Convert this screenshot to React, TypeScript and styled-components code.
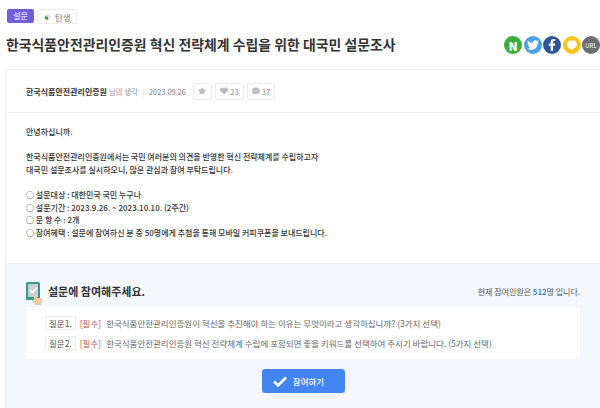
import React from "react";
import styled, { createGlobalStyle } from "styled-components";
import { FaFacebookF, FaTwitter, FaStar, FaHeart, FaCommentDots } from "react-icons/fa";
import { RiChat1Fill } from "react-icons/ri";

const GlobalStyle = createGlobalStyle`
  html, body {
    margin: 0;
    padding: 0;
    background: #fff;
    overflow: hidden;
  }
  body {
    font-family: "Noto Sans CJK KR", "Noto Sans", sans-serif;
    color: #444;
  }
`;

const Page = styled.div`
  width: 600px;
  height: 408px;
  overflow: hidden;
`;

const TagRow = styled.div`
  display: flex;
  gap: 3px;
  padding: 9px 0 0 7px;
  height: 14px;
`;

const PurpleTag = styled.span`
  width: 27px;
  height: 14px;
  border-radius: 2px;
  background: #6f5fd8;
  color: #fff;
  font-size: 8px;
  line-height: 14px;
  text-align: center;
`;

const OutlineTag = styled.span`
  display: flex;
  align-items: center;
  gap: 4px;
  height: 13px;
  padding: 0 5px;
  border: 1px solid #eee;
  border-radius: 2px;
  color: #777;
  font-size: 8.5px;
`;

const TitleRow = styled.div`
  display: flex;
  align-items: center;
  justify-content: space-between;
  height: 44px;
  padding-bottom: 2px;
`;

const Title = styled.h1`
  margin: 0 0 2px 6px;
  font-size: 13.9px;
  font-weight: 700;
  color: #333;
  white-space: nowrap;
`;

const ShareRow = styled.div`
  display: flex;
  gap: 1.5px;
`;

const ShareButton = styled.span<{ $bg: string }>`
  display: flex;
  align-items: center;
  justify-content: center;
  width: 18px;
  height: 18px;
  border-radius: 50%;
  background: ${(p) => p.$bg};
  color: #fff;
  font-size: 12px;
  font-weight: 900;
  flex: none;
`;

const UrlLabel = styled.span`
  font-size: 6px;
  font-weight: 400;
`;

const Card = styled.section`
  margin-left: 5px;
  border-top: 1px solid #eee;
  border-left: 1px solid #eee;
`;

const MetaRow = styled.div`
  display: flex;
  align-items: center;
  height: 42px;
  padding-left: 20px;
  border-bottom: 1px solid #eee;
  font-size: 7.5px;
  color: #999;
`;

const Author = styled.strong`
  color: #333;
  font-size: 8px;
  font-weight: 700;
`;

const Divider = styled.span`
  margin: 0 4.5px;
  color: #ddd;
`;

const DateText = styled.span`
  color: #777;
  margin-right: 7px;
  font-size: 7.4px;
`;

const Stat = styled.span<{ $w: number }>`
  display: flex;
  align-items: center;
  justify-content: center;
  gap: 2px;
  width: ${(p) => p.$w}px;
  height: 15px;
  margin-right: 3px;
  border: 1px solid #eee;
  border-radius: 2px;
  color: #888;
  font-size: 7.5px;
  svg {
    color: #bbb;
    font-size: 8px;
  }
`;

const Body = styled.div`
  padding: 13px 20px 0;
  height: 137px;
  font-size: 8px;
  font-weight: 500;
  line-height: 12.6px;
  color: #333;
  white-space: nowrap;
`;

const Para = styled.p`
  margin: 0 0 12.6px;
`;

const SurveyBox = styled.div`
  height: 145px;
  padding: 17px 20px 0;
  background: #f4f7fc;
  border-top: 1px solid #eee;
`;

const SurveyHead = styled.div`
  display: flex;
  align-items: center;
  justify-content: space-between;
  height: 20px;
  margin-bottom: 6px;
`;

const SurveyTitle = styled.div`
  display: flex;
  align-items: flex-start;
  gap: 5px;
  height: 20px;
  font-size: 11px;
  line-height: 20px;
  font-weight: 700;
  color: #333;
`;

const CountText = styled.span`
  font-size: 8px;
  color: #555;
  b {
    font-weight: 500;
    color: #2a6fb0;
  }
`;

const QuestionList = styled.div`
  display: flex;
  flex-direction: column;
  gap: 7px;
  height: 52px;
  padding: 9px 19px 0;
  box-sizing: border-box;
  background: #fff;
`;

const Question = styled.div`
  display: flex;
  align-items: center;
  height: 13px;
  font-size: 8.5px;
  color: #666;
  white-space: nowrap;
`;

const QuestionNo = styled.span`
  height: 12px;
  line-height: 12px;
  padding: 0 3px;
  margin-right: 4px;
  border: 1px solid #eee;
  color: #555;
`;

const Required = styled.span`
  color: #c0504d;
  margin-right: 5px;
`;

const ButtonRow = styled.div`
  display: flex;
  justify-content: center;
  margin-top: 10px;
`;

const JoinButton = styled.button`
  display: flex;
  align-items: center;
  justify-content: center;
  gap: 6px;
  width: 83px;
  height: 24px;
  padding: 0 9px 0 0;
  border: 0;
  border-radius: 3px;
  background: #4285f0;
  color: #fff;
  font-family: inherit;
  font-size: 8.5px;
  font-weight: 500;
`;

const SurveyIcon = () => (
  <svg width="17" height="25" viewBox="0 0 17 25">
    <rect x="0" y="1" width="14" height="18" rx="1.5" fill="#2a9d8f" />
    <rect x="2" y="3" width="10" height="13" fill="#c9ced3" />
    <path d="M4 9l2.5 2.5L11 6.5" stroke="#fff" strokeWidth="1.6" fill="none" />
    <path d="M8 17h8v5a2 2 0 0 1-2 2h-4a2 2 0 0 1-2-2z" fill="#f6c9a8" />
    <rect x="8" y="13" width="3" height="6" rx="1.5" fill="#f6c9a8" />
  </svg>
);

const LeafIcon = () => (
  <svg width="8" height="8" viewBox="0 0 8 8">
    <path d="M1 3l3-2 3 1v5l-3 0-3-2z" fill="#e3e3e3" />
    <path d="M2 3l3 1v3l-3-1z" fill="#3f9d45" />
  </svg>
);

const CheckIcon = () => (
  <svg width="14" height="11" viewBox="0 0 14 11">
    <path d="M1 5.5l4 4L13 1.5" stroke="#fff" strokeWidth="2.6" fill="none" />
  </svg>
);

export default function App() {
  return (
    <Page>
      <GlobalStyle />
      <TagRow>
        <PurpleTag>설문</PurpleTag>
        <OutlineTag>
          <LeafIcon />
          탄생
        </OutlineTag>
      </TagRow>
      <TitleRow>
        <Title>한국식품안전관리인증원 혁신 전략체계 수립을 위한 대국민 설문조사</Title>
        <ShareRow>
          <ShareButton $bg="#3aae3f">N</ShareButton>
          <ShareButton $bg="#4aa3e0"><FaTwitter /></ShareButton>
          <ShareButton $bg="#2f5597"><FaFacebookF /></ShareButton>
          <ShareButton $bg="#f7c51e"><RiChat1Fill /></ShareButton>
          <ShareButton $bg="#6b6e73"><UrlLabel>URL</UrlLabel></ShareButton>
        </ShareRow>
      </TitleRow>
      <Card>
        <MetaRow>
          <Author>한국식품안전관리인증원</Author>
          &nbsp;님의 생각
          <Divider>|</Divider>
          <DateText>2023.09.26</DateText>
          <Stat $w={17}><FaStar /></Stat>
          <Stat $w={27}><FaHeart />23</Stat>
          <Stat $w={26}><FaCommentDots />37</Stat>
        </MetaRow>
        <Body>
          <Para>안녕하십니까.</Para>
          <Para>
            한국식품안전관리인증원에서는 국민 여러분의 의견을 반영한 혁신 전략체계를 수립하고자
            <br />
            대국민 설문조사를 실시하오니, 많은 관심과 참여 부탁드립니다.
          </Para>
          <div>○ 설문대상 : 대한민국 국민 누구나</div>
          <div>○ 설문기간 : 2023.9.26. ~ 2023.10.10. (2주간)</div>
          <div>○ 문 항 수 : 2개</div>
          <div>○ 참여혜택 : 설문에 참여하신 분 중 50명에게 추첨을 통해 모바일 커피쿠폰을 보내드립니다.</div>
        </Body>
        <SurveyBox>
          <SurveyHead>
            <SurveyTitle>
              <SurveyIcon />
              설문에 참여해주세요.
            </SurveyTitle>
            <CountText>현재 참여인원은 <b>512</b>명 입니다.</CountText>
          </SurveyHead>
          <QuestionList>
            <Question>
              <QuestionNo>질문1.</QuestionNo>
              <Required>[필수]</Required>
              한국식품안전관리인증원이 혁신을 추진해야 하는 이유는 무엇이라고 생각하십니까? (3가지 선택)
            </Question>
            <Question>
              <QuestionNo>질문2.</QuestionNo>
              <Required>[필수]</Required>
              한국식품안전관리인증원 혁신 전략체계 수립에 포함되면 좋을 키워드를 선택하여 주시기 바랍니다. (5가지 선택)
            </Question>
          </QuestionList>
          <ButtonRow>
            <JoinButton><CheckIcon />참여하기</JoinButton>
          </ButtonRow>
        </SurveyBox>
      </Card>
    </Page>
  );
}
